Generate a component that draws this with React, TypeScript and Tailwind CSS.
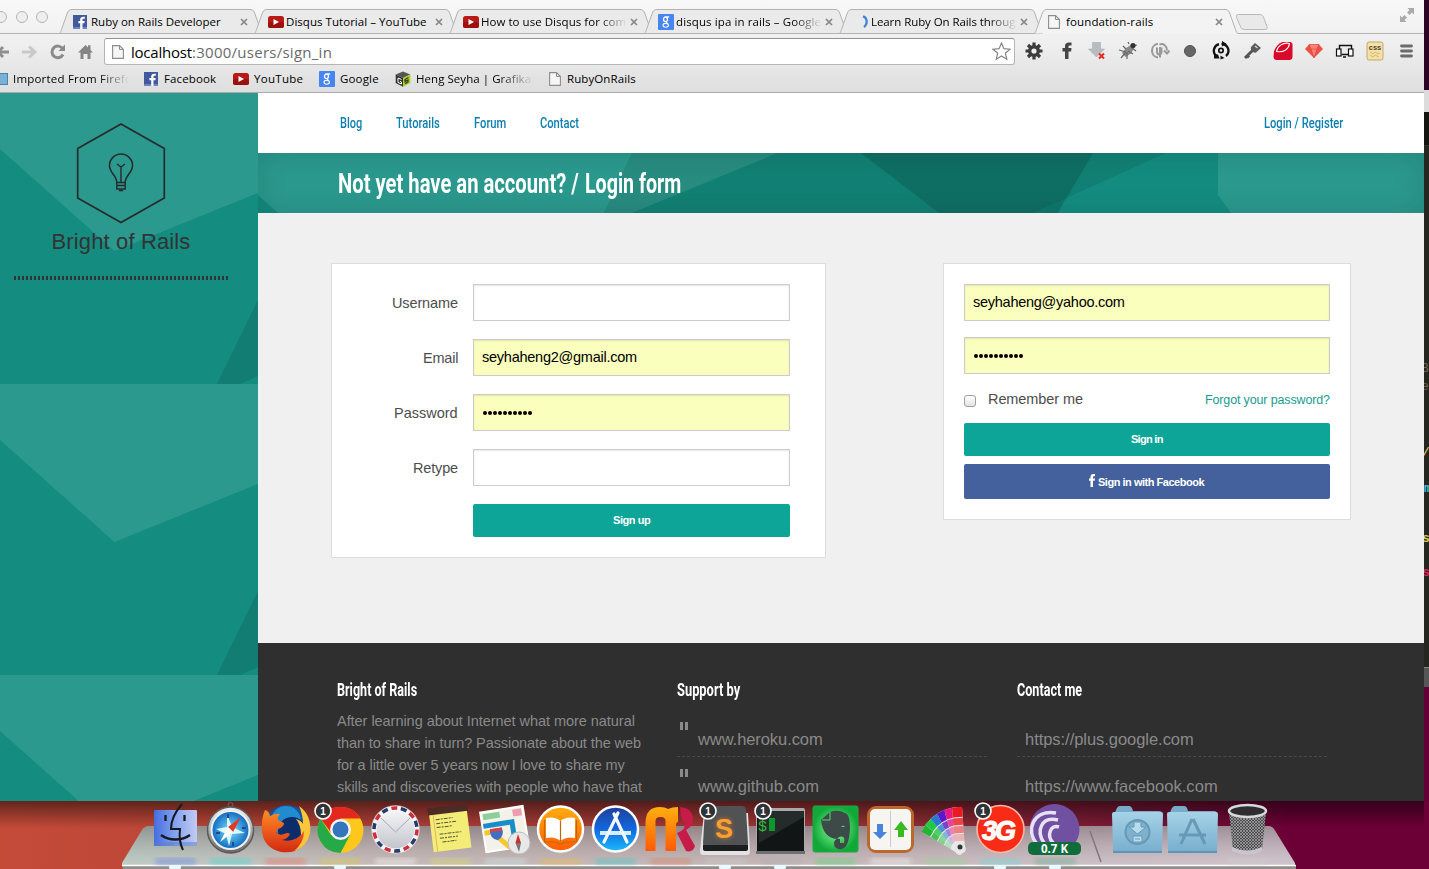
import React, { useLayoutEffect, useRef, useState } from "react";
import type { ReactNode } from "react";

type FitProps = { w: number; children: string; className?: string; stretch?: boolean };

/* Sets a line of text to a given measure, by tracking or by condensing the glyphs. */
function Fit({ w, children, className = "", stretch = false }: FitProps) {
  const ref = useRef<HTMLSpanElement>(null);
  const [style, setStyle] = useState<React.CSSProperties>({});
  useLayoutEffect(() => {
    const natural = ref.current ? ref.current.offsetWidth : w;
    setStyle(
      stretch
        ? { transform: `scaleX(${w / natural})` }
        : { letterSpacing: `${(w - natural) / children.length}px` },
    );
  }, [w, children, stretch]);
  return (
    <span className={`inline-block shrink-0 whitespace-nowrap ${className}`} style={{ width: w }}>
      <span ref={ref} className="inline-block origin-left" style={style}>
        {children}
      </span>
    </span>
  );
}

/* ---------- small site icons ---------- */

const FacebookIcon = () => (
  <svg width="14" height="14" viewBox="0 0 14 14" className="shrink-0">
    <rect width="14" height="14" fill="#42599b" />
    <rect y="12" width="14" height="2" fill="#6d84bf" />
    <path d="M7.2 14V8.3H5.4V6.1h1.8V4.6c0-2 1.2-2.900 3-2.900.7 0 1.300.1 1.600.1v2h-1.200c-.9 0-1.100.5-1.100 1.100v1.200h2.200l-.3 2.200H9.500V14z" fill="#fff" />
  </svg>
);
const YoutubeIcon = () => (
  <svg width="16" height="12" viewBox="0 0 16 12" className="shrink-0">
    <rect width="16" height="12" rx="2.500" fill="#b81a16" />
    <rect y="6" width="16" height="6" rx="2.500" fill="#9c100e" />
    <path d="M5.500 3v6l5.500-3z" fill="#fff" />
  </svg>
);
const GoogleIcon = () => (
  <svg width="16" height="16" viewBox="0 0 16 16" className="shrink-0">
    <rect width="16" height="16" rx="1" fill="#4686f4" />
    <ellipse cx="7.500" cy="5.300" rx="2" ry="2.300" fill="none" stroke="#fff" strokeWidth="1.300" />
    <ellipse cx="7.700" cy="11.300" rx="2.700" ry="1.900" fill="none" stroke="#fff" strokeWidth="1.100" />
    <path d="M8.500 2.900h2.700M8 7.500l1.500 2" stroke="#fff" strokeWidth="1.100" />
  </svg>
);
const PageIcon = () => (
  <svg width="12" height="14" viewBox="0 0 12 14" className="shrink-0">
    <path d="M.6.6h6.900l3.900 3.900v8.900H.6z" fill="#f6f6f6" stroke="#8d8d8d" strokeWidth="1.100" />
    <path d="M7.500.6v3.900h3.900" fill="none" stroke="#8d8d8d" />
  </svg>
);
const SpinnerIcon = () => (
  <svg width="16" height="16" viewBox="0 0 16 16" className="shrink-0">
    <path d="M10 2.200c4.500 1.500 5 7.500 1 11" fill="none" stroke="#3f83d6" strokeWidth="2.200" />
  </svg>
);
const CubeIcon = () => (
  <svg width="16" height="16" viewBox="0 0 16 16" className="shrink-0">
    <path d="M8 .5l7.300 3L8 7 .7 3.500z" fill="#555" />
    <path d="M.7 3.500L8 7v8.700L.7 12z" fill="#333" />
    <path d="M15.300 3.500L8 7v8.700l7.300-3.700z" fill="#a9cf22" />
    <path d="M6.500 8.500L3 7v4.500l3.500 1.500v-2l-1.500-.6" fill="none" stroke="#fff" strokeWidth="1" />
    <path d="M13.500 6.500l-3.500 2v2l3-1.500v2l-3 1.600" fill="none" stroke="#333" strokeWidth="1.200" />
  </svg>
);

/* ---------- browser chrome ---------- */

type TabData = { icon: ReactNode; title: string; w: number; faded?: boolean; active?: boolean };
const tabs: TabData[] = [
  { icon: <FacebookIcon />, title: "Ruby on Rails Developer", w: 130 },
  { icon: <YoutubeIcon />, title: "Disqus Tutorial – YouTube", w: 141 },
  { icon: <YoutubeIcon />, title: "How to use Disqus for com", w: 145, faded: true },
  { icon: <GoogleIcon />, title: "disqus ipa in rails – Google", w: 145, faded: true },
  { icon: <SpinnerIcon />, title: "Learn Ruby On Rails throug", w: 144, faded: true },
  { icon: <PageIcon />, title: "foundation-rails", w: 87, active: true },
];

function Tab({ icon, title, w, faded, active }: TabData) {
  return (
    <div className="relative -ml-[9px] flex h-[25px] w-[204px] shrink-0 items-center pl-[15px]">
      <svg className="absolute inset-0" width="204" height="25" viewBox="0 0 204 25">
        <path
          d="M0 24.500C1 24.500 1.500 23.500 2.500 20.500L8 5C9 2 10 .5 13 .5H191C194 .5 195 2 196 5L201.500 20.500C202.500 23.500 203 24.500 204 24.500"
          fill={active ? "#f3f3f3" : "#eaeaea"}
          stroke="#b2b2b2"
        />
        {active ? null : <path d="M0 24.500H204" stroke="#b2b2b2" />}
      </svg>
      <span className="relative -ml-px mr-px flex w-[17px] shrink-0 items-center">{icon}</span>
      <span className={`relative flex w-[145px] overflow-hidden leading-5 ${faded ? "[mask-image:linear-gradient(to_right,#000_118px,transparent_146px)]" : ""}`}>
        <Fit w={w}>{title}</Fit>
      </span>
      <svg className="relative ml-[4px] mt-px shrink-0" width="8" height="8" viewBox="0 0 8 8">
        <path d="M1 1l6 6M7 1L1 7" stroke="#868686" strokeWidth="1.700" />
      </svg>
    </div>
  );
}

const Slot = ({ children, className = "w-[31px]" }: { children: ReactNode; className?: string }) => (
  <span className={`flex shrink-0 items-center justify-center ${className}`}>
    <svg width="20" height="20" viewBox="0 0 20 20">{children}</svg>
  </span>
);

function Extensions() {
  return (
    <div className="flex h-[36px] items-center">
      <Slot className="w-[32px]">
        <g stroke="#3c3c3c" strokeWidth="3.200">
          <path d="M10 1.500v17M1.500 10h17M4 4l12 12M16 4L4 16" />
        </g>
        <circle cx="10" cy="10" r="6" fill="#3c3c3c" />
        <circle cx="10" cy="10" r="2.600" fill="#efefef" />
      </Slot>
      <Slot className="w-[33px]">
        <path d="M8 18v-7.500H5.500V7H8V5.500C8 2.500 9.500 1.500 12 1.500h2.500v3h-1.700c-1 0-1.300.3-1.300 1.200V7h3l-.4 3.500h-2.600V18z" fill="#444" />
      </Slot>
      <Slot className="w-[28px]">
        <path d="M5.500 1.500h8V8h4L9.500 16 1.500 8h4z" fill="#b8bcc1" stroke="#a0a4a8" strokeWidth=".5" />
        <path d="M12 12.500l5 5M17 12.500l-5 5" stroke="#e52a22" strokeWidth="2" />
      </Slot>
      <Slot className="w-[33px]">
        <path d="M4 12l4-5 5-3 3 3-3 5.500-5.500 3.500z" fill="#8b8b8b" />
        <path d="M1 9l7 2M3 17l5-6M9 18v-7M15 13l-5-3M11 3l-1-2M15 5l4-1M14 7l4 3M5 5l3 3" stroke="#666" strokeWidth="1.200" />
        <circle cx="15" cy="4.500" r="2.600" fill="#333" />
      </Slot>
      <Slot className="w-[31px]">
        <path d="M8 2.800C0 4 0 15.500 8 16.500M7 6.500v4c0 4 4.500 4 4.500 0v-4M10 6v10.500M9.500 3.500c4-1.500 7.500 1.500 7.500 6M14 9.500l3 3 2.500-3" fill="none" stroke="#999" strokeWidth="2" />
      </Slot>
      <Slot className="w-[30px]"><circle cx="10" cy="10" r="5.500" fill="#666" stroke="#515151" /></Slot>
      <Slot>
        <path d="M8 3.200A6.800 6.800 0 005 14.800M10.500 3a6.800 6.800 0 014.500 12" fill="none" stroke="#111" strokeWidth="2.300" />
        <path d="M3 13v4.500h5.500L7 13.500zM11 0v5.500l4.500-2.700zM9.500 14.500v4l4-1.500z" fill="#111" />
        <circle cx="10" cy="9.500" r="2.200" fill="none" stroke="#111" strokeWidth="1.700" />
      </Slot>
      <Slot>
        <path d="M3 17l8-8M5 14.500l2 2" stroke="#555" strokeWidth="3" />
        <path d="M9 6l4-4 6 5-5 4.500c-2 1-6-2-5-5.500z" fill="#5b5b5b" />
        <path d="M13 5l2.500 2" stroke="#ddd" strokeWidth="1.300" />
      </Slot>
      <Slot>
        <path d="M1 10Q4 3 9.500 1H18l1.500 2v13q0 2.500-2.500 3H3q-2.500-.5-2.500-3z" fill="#d9092a" />
        <path d="M3.500 10.500C4.500 5 10 1 16.500 2.500 16 7.500 11 12 3.500 10.500z" fill="none" stroke="#fff" strokeWidth="1.100" />
      </Slot>
      <Slot>
        <path d="M5 3.500h10l4 4.500-9 9-9-9z" fill="#ee5144" />
        <path d="M5 3.500h10L13 8H7zM7 8l3 9 3-9" fill="#ff8278" stroke="#cc3930" strokeWidth=".5" />
      </Slot>
      <Slot>
        <path d="M4.500 8V4.500h12V8M6.500 13.500h7M8 16h3" fill="none" stroke="#111" strokeWidth="1.400" />
        <rect x="1.500" y="8" width="4.500" height="7" fill="#fff" stroke="#111" strokeWidth="1.200" />
        <rect x="13.500" y="8" width="4.500" height="7" fill="#fff" stroke="#111" strokeWidth="1.200" />
      </Slot>
      <Slot>
        <rect x="1" y="1" width="16" height="18" rx="2" fill="#f3e1a9" stroke="#c3a868" />
        <text x="9" y="8.500" textAnchor="middle" fontSize="7.500" fontWeight="700" fontFamily="Liberation Sans, sans-serif" fill="#57442a">css</text>
        <path d="M4 11l3 2 2-2 3 2 2-1M4 14l3 2 2-2 4 2" fill="none" stroke="#d3b86d" />
      </Slot>
      <Slot>
        <path d="M4.500 5h10M4.500 10h10M4.500 15h10" stroke="#6b6b6b" strokeWidth="2.800" strokeLinecap="round" />
      </Slot>
    </div>
  );
}

function BrowserChrome() {
  return (
    <header className="flex h-[93px] flex-col overflow-hidden border-b border-[#ababab] bg-gradient-to-b from-[#f8f8f8] via-[#eeeeee] to-[#dedede] font-['Open_Sans',sans-serif] text-[11.5px] font-medium text-black">
      <div className="flex h-[34px] shrink-0 items-end">
        <div className="flex h-full w-[59px] shrink-0 items-center border-b border-[#b2b2b2]">
          <span className="-ml-[5px] size-3 shrink-0 rounded-full border-[1.5px] border-[#b4b4b4] bg-[#eeeeee]" />
          <span className="ml-[9px] size-3 shrink-0 rounded-full border-[1.5px] border-[#b4b4b4] bg-[#eeeeee]" />
          <span className="ml-[8px] size-3 shrink-0 rounded-full border-[1.5px] border-[#b4b4b4] bg-[#eeeeee]" />
        </div>
        <div className="flex pl-[9px]">
          {tabs.map((t) => <Tab key={t.title} {...t} />)}
        </div>
        <div className="flex h-full flex-1 items-center justify-between border-b border-[#b2b2b2] pr-[10px]">
          <svg className="-ml-[3px] mt-[10px]" width="34" height="16" viewBox="0 0 34 16">
            <path d="M3.500.5H24c3 0 4 1 5 4l3 8c.6 2 0 3-2 3H10c-3 0-4-1-5-4L1.500 3.500c-.6-2 0-3 2-3z" fill="#e9e9e9" stroke="#b9b9b9" />
          </svg>
          <svg className="-mt-[3px]" width="14" height="14" viewBox="0 0 14 14">
            <path d="M7.500 0H14v6.500L12 4.500 9.500 7 7 4.500 9.500 2zM6.500 14H0V7.500l2 2L4.500 7 7 9.500 4.500 12z" fill="#aaa" />
          </svg>
        </div>
      </div>
      <div className="flex h-[35px] shrink-0 items-center">
        <svg width="104" height="20" viewBox="0 0 104 20" fill="none">
          <path d="M9 10H-2M3 5l-5 5 5 5" stroke="#8f8f8f" strokeWidth="3" />
          <path d="M22 10h12M29 4.500l6 5.500-6 5.500" stroke="#c9c9c9" strokeWidth="3" />
          <path d="M62.500 6.500A5.800 5.800 0 1063 12.500" stroke="#8a8a8a" strokeWidth="3" />
          <path d="M65 2.500V9h-6.500z" fill="#8a8a8a" />
          <path d="M78 10.500L85.500 3l2.500 2.500V3.200h2.500V8l2.500 2.500h-2.500V17h-3v-5h-4v5h-3v-6.500z" fill="#858585" />
        </svg>
        <div className="flex h-[27px] w-[911px] shrink-0 items-center rounded-[3px] border border-t-[1.5px] border-[#b5b5b5] border-t-[#929292] bg-white pl-[7px]">
          <PageIcon />
          <span className="ml-[7px] flex text-[15px] leading-6">
            <Fit w={61}>localhost</Fit>
            <Fit w={140} className="text-[#6a6a6a]">:3000/users/sign_in</Fit>
          </span>
          <svg className="ml-auto mr-[3px]" width="19" height="19" viewBox="0 0 19 19">
            <path d="M9.500 1l2.400 5.700 6.100.5-4.700 4 1.500 6-5.300-3.300-5.300 3.300 1.500-6-4.700-4 6.100-.5z" fill="#fff" stroke="#858585" strokeWidth="1.200" />
          </svg>
        </div>
        <div className="ml-[3px] -mt-px"><Extensions /></div>
      </div>
      <div className="flex h-[20px] shrink-0 items-center leading-5">
        <span className="h-[12px] w-[8px] border border-l-0 border-[#4a84ac] bg-[#78b1d6]" />
        <span className="ml-[5px] w-[131px] [mask-image:linear-gradient(to_right,#000_86px,transparent_116px)]"><Fit w={119}>Imported From Firefo</Fit></span>
        <FacebookIcon /><Fit w={52} className="ml-[6px] mr-[17px]">Facebook</Fit>
        <YoutubeIcon /><Fit w={49} className="ml-[5px] mr-[16px]">YouTube</Fit>
        <GoogleIcon /><Fit w={39} className="ml-[5px] mr-[16px]">Google</Fit>
        <CubeIcon />
        <span className="ml-[5px] w-[133px] [mask-image:linear-gradient(to_right,#000_82px,transparent_118px)]"><Fit w={115}>Heng Seyha | Grafika</Fit></span>
        <PageIcon /><Fit w={69} className="ml-[6px]">RubyOnRails</Fit>
      </div>
    </header>
  );
}

/* ---------- page ---------- */

function Tile() {
  return (
    <svg className="block shrink-0" width="258" height="291" viewBox="0 0 258 291">
      <path d="M0 0H258V291H0z" fill="#148c80" />
      <path d="M0 0H258V100L114.500 158 0 56z" fill="#2b998e" />
      <path d="M258 207L217 291H240L258 283z" fill="#127d72" />
    </svg>
  );
}

function Sidebar() {
  return (
    <aside className="relative h-full w-[258px] shrink-0 overflow-hidden">
      <div className="flex flex-col"><Tile /><Tile /><Tile /></div>
      <div className="absolute inset-0 flex flex-col items-center pt-[30px]">
        <svg className="-ml-4" width="90" height="101" viewBox="0 0 90 101" fill="none" stroke="#252b2b" strokeWidth="1.700">
          <path d="M45 1L88.300 25.500V75L45 99.500 1.700 75V25.500z" />
          <path d="M40.800 59.500c0-7-7.300-9.500-7.300-17a11.500 11.500 0 0123 0c0 7.500-7.300 10-7.300 17z" strokeWidth="1.500" />
          <path d="M45 59V44l-4-3M45 44l4-3M40.800 59v7h8.400v-7M41 62.500h8" strokeWidth="1.400" />
          <path d="M43 67.500h4" strokeWidth="1.600" />
        </svg>
        <div className="-ml-4 mt-[3px] h-[30px] font-['Liberation_Sans',sans-serif] text-[22px] leading-[30px] text-[#333]">
          <Fit w={139}>Bright of Rails</Fit>
        </div>
        <div className="-ml-4 mt-[19px] h-1 w-[214px] bg-[repeating-linear-gradient(to_right,#333_0_2px,transparent_2px_4px)]" />
      </div>
    </aside>
  );
}

function Nav() {
  return (
    <nav className="flex h-[60px] items-center bg-white pl-[82px] pr-[81px] font-[Roboto,sans-serif] text-[14px] font-medium text-[#0c7fb0]">
      <Fit stretch w={22} className="mr-[34px]">Blog</Fit>
      <Fit stretch w={44} className="mr-[34px]">Tutorails</Fit>
      <Fit stretch w={32} className="mr-[34px]">Forum</Fit>
      <Fit stretch w={39}>Contact</Fit>
      <Fit stretch w={79} className="ml-auto">Login / Register</Fit>
    </nav>
  );
}

function Banner() {
  return (
    <div className="relative flex h-[60px] items-center overflow-hidden">
      <svg className="absolute inset-0" width="1166" height="60" viewBox="0 0 1166 60">
        <path d="M0 0H1166V60H0z" fill="#148c80" />
        <path d="M0 0H374L346 60H20L0 42z" fill="#2b998e" />
        <path d="M374 0H520L374 60H346z" fill="#288c80" />
        <path d="M520 0H908L775 60H374z" fill="#128074" />
        <path d="M603 0H835L808 46 775 60H681z" fill="#0f6f64" />
        <path d="M808 45L800 60H775z" fill="#10776b" />
        <path d="M960 0H1166V60H973L960 42z" fill="#2b998e" />
      </svg>
      <div className="absolute inset-0 shadow-[inset_0_0_30px_rgba(0,0,0,0.13)]" />
      <h1 className="relative mt-[2px] flex gap-[6px] pl-[80px] font-[Roboto,sans-serif] text-[28px] font-bold leading-[60px] text-white">
        <Fit stretch w={241}>Not yet have an account? /</Fit>
        <Fit stretch w={96}>Login form</Fit>
      </h1>
    </div>
  );
}

function Field({ value, filled, w }: { value?: string; filled?: boolean; w?: number }) {
  return (
    <div className={`flex h-[37px] flex-1 items-center border border-[#ccc] pl-2 text-[14.5px] text-black shadow-[inset_0_1px_2px_rgba(0,0,0,0.1)] ${filled ? "bg-[#faffbd]" : "bg-white"}`}>
      {value ? <Fit w={w ?? 100} className="pt-px">{value}</Fit> : null}
      {filled && !value ? (
        <span className="flex gap-px pl-px">
          {Array.from({ length: 10 }, (_, i) => <span key={i} className="size-1 rounded-full bg-black" />)}
        </span>
      ) : null}
    </div>
  );
}

function Row({ label, w, children }: { label: string; w: number; children: ReactNode }) {
  return (
    <div className="mb-[18px] flex items-center">
      <label className="mr-[15px] flex w-[106px] justify-end pt-[2px] text-[14.5px] text-[#4d4d4d]"><Fit w={w}>{label}</Fit></label>
      {children}
    </div>
  );
}

function Forms() {
  return (
    <main className="flex h-[430px] items-start bg-[#f0f0f0] pl-[73px] pt-[50px] font-['Liberation_Sans',sans-serif]">
      <section className="h-[295px] w-[495px] border border-[#ddd] bg-white pl-5 pr-[35px] pt-5">
        <Row label="Username" w={66}><Field /></Row>
        <Row label="Email" w={35}><Field filled value="seyhaheng2@gmail.com" w={155} /></Row>
        <Row label="Password" w={64}><Field filled /></Row>
        <Row label="Retype" w={45}><Field /></Row>
        <div className="ml-[121px] flex h-[33px] items-center justify-center rounded-[2px] bg-[#0ea599] text-[11px] font-bold text-white"><Fit w={37}>Sign up</Fit></div>
      </section>
      <section className="ml-[117px] flex h-[257px] w-[408px] flex-col border border-[#ddd] bg-white px-5 pt-5">
        <div className="flex"><Field filled value="seyhaheng@yahoo.com" w={152} /></div>
        <div className="mt-4 flex"><Field filled /></div>
        <div className="mt-[15px] flex h-[22px] items-center">
          <span className="mt-px size-3 rounded-[3px] border border-[#a0a0a0] bg-gradient-to-b from-white to-[#e3e3e3]" />
          <Fit w={95} className="ml-3 text-[14.5px] text-[#4d4d4d]">Remember me</Fit>
          <Fit w={125} className="ml-auto text-[12.5px] text-[#179c90]">Forgot your password?</Fit>
        </div>
        <div className="mt-[12px] flex h-[33px] items-center justify-center rounded-[2px] bg-[#0ea599] text-[11px] font-bold text-white"><Fit w={32}>Sign in</Fit></div>
        <div className="mt-2 flex h-[35px] items-center justify-center rounded-[2px] bg-[#45619d] pr-px text-[11px] font-bold text-white">
          <svg className="-mt-[3px] mr-[3px]" width="6" height="13" viewBox="0 0 6 13"><path d="M1.500 13V6.800H0V4.500h1.500V3c0-2 1-3 2.700-3H6v2.300H4.800c-.6 0-.8.3-.8.9v1.300h2l-.3 2.300H4V13z" fill="#fff" /></svg>
          <Fit w={106} className="pt-px">Sign in with Facebook</Fit>
        </div>
      </section>
    </main>
  );
}

const Heading = ({ w, children }: { w: number; children: string }) => (
  <h2 className="h-[22px] font-[Roboto,sans-serif] text-[19px] font-bold leading-[24px] text-white"><Fit stretch w={w}>{children}</Fit></h2>
);

const Mark = () => (
  <span className="flex w-[21px] gap-[2px] pl-[3px] pt-[3px]">
    <span className="h-2 w-[3px] bg-[#8a8a8a]" /><span className="h-2 w-[3px] bg-[#8a8a8a]" />
  </span>
);

function LinkList({ items, marks }: { items: [string, number][]; marks?: boolean }) {
  return (
    <ul className="mt-[19px] w-[310px] text-[16.5px] leading-5">
      {items.map(([text, w]) => (
        <li key={text} className="mb-[9px] flex h-[38px] border-b border-dashed border-[#4a4a4a]">
          {marks ? <Mark /> : <span className="w-2" />}
          <span className="pt-[10px]"><Fit w={w}>{text}</Fit></span>
        </li>
      ))}
    </ul>
  );
}

function Footer() {
  return (
    <footer className="flex flex-1 overflow-hidden bg-[#2f2f2f] pl-[79px] pt-[35px] font-['Liberation_Sans',sans-serif] text-[#8a8a8a]">
      <div className="w-[340px]">
        <Heading w={80}>Bright of Rails</Heading>
        <p className="mt-[10px] flex flex-col text-[14.5px] leading-[22px]">
          <Fit w={298}>After learning about Internet what more natural</Fit>
          <Fit w={304}>than to share in turn? Passionate about the web</Fit>
          <Fit w={288}>for a little over 5 years now I love to share my</Fit>
          <Fit w={305}>skills and discoveries with people who have that</Fit>
        </p>
      </div>
      <div className="w-[340px]">
        <Heading w={63}>Support by</Heading>
        <LinkList marks items={[["www.heroku.com", 125], ["www.github.com", 121]]} />
      </div>
      <div>
        <Heading w={65}>Contact me</Heading>
        <LinkList items={[["https://plus.google.com", 169], ["https://www.facebook.com", 193]]} />
      </div>
    </footer>
  );
}

/* ---------- windows behind the browser ---------- */

function EditorEdge() {
  return (
    <div className="flex w-[5px] flex-col overflow-hidden bg-[#640035] font-['Liberation_Mono',monospace] text-[13px] leading-[18px]">
      <div className="h-[90px] shrink-0 bg-[#2c0424]" />
      <div className="h-[22px] shrink-0 bg-[#dcdcdc]" />
      <div className="h-[34px] shrink-0 border-b border-[#333] bg-[#141510]" />
      <div className="h-[521px] shrink-0 bg-[#25261f] pt-[214px]">
        <div className="-ml-[3px] text-[#6c6856]">B</div>
        <div className="-ml-[3px] text-[#6c6856]">e</div>
        <div className="-ml-[2px] mt-[48px] text-[#e6db74]">/</div>
        <div className="mt-[18px] font-bold text-[#45bdd2]">m</div>
        <div className="-ml-[2px] mt-[32px] font-bold text-[#d8cf65]">s</div>
        <div className="-ml-[2px] mt-[16px] font-bold text-[#dc2161]">s</div>
      </div>
      <div className="h-[20px] shrink-0 border-t border-[#888] bg-[#565656]" />
    </div>
  );
}

/* ---------- dock ---------- */

const Cell = ({ children, glow, running }: { children: ReactNode; glow?: string; running?: boolean }) => (
  <svg className="shrink-0 overflow-visible" width="55" height="68" viewBox="0 0 55 68">
    {glow ? <rect x="7" y="57" width="41" height="7" rx="3" fill={glow} opacity=".4" filter="url(#soft)" /> : null}
    {running ? <rect x="21" y="64" width="12" height="4" rx="1.500" fill="#e8faff" /> : null}
    {children}
  </svg>
);

const Badge = () => (
  <g>
    <circle cx="10" cy="10" r="8" fill="#303336" stroke="#fff" strokeWidth="1.600" />
    <text x="10" y="13.500" textAnchor="middle" fontSize="10" fontWeight="700" fontFamily="Liberation Sans, sans-serif" fill="#fff">1</text>
  </g>
);

const swatches = ["#22b52e", "#22c947", "#2879cf", "#5c19c9", "#e51a84", "#ea1a22"];

function Folder({ children }: { children: ReactNode }) {
  return (
    <Cell>
      <path d="M5 13q0-2 1-4l1-2q1-2 3-2h9q2 0 3 2l1 3h26q3 0 3 3v37H3z" fill="#78abc7" />
      <path d="M2 13q0-2 2-2h47q2 0 2 2l-1 36q0 2-2 2H5q-2 0-2-2z" fill="url(#folder)" />
      <path d="M3 50h49v2H3z" fill="#5f94b3" />
      <g fill="none" stroke="#6699b6" strokeWidth="2">{children}</g>
    </Cell>
  );
}

function Dock() {
  return (
    <div className="relative h-[68px] w-full bg-gradient-to-r from-[#c54b39] via-[#983333] via-60% to-[#6c0036] to-90%">
      <div className="absolute inset-y-0 left-0 w-[1424px] bg-gradient-to-b from-black/50 to-transparent to-40%" />
      <svg className="absolute inset-0" width="1429" height="68" viewBox="0 0 1429 68">
        <defs>
          <linearGradient id="shelf"><stop offset="0" stopColor="#adc0b7" /><stop offset=".2" stopColor="#b7aaa7" /><stop offset=".5" stopColor="#b6a4a5" /><stop offset="1" stopColor="#c5b6c0" /></linearGradient>
          <linearGradient id="shade" x2="0" y2="1"><stop offset="0" stopColor="#54434a" stopOpacity=".35" /><stop offset="1" stopColor="#fff" stopOpacity=".22" /></linearGradient>
          <linearGradient id="folder" x2="0" y2="1"><stop offset="0" stopColor="#a5d2e8" /><stop offset="1" stopColor="#78aecd" /></linearGradient>
          <linearGradient id="finder"><stop offset="0" stopColor="#456de0" /><stop offset=".5" stopColor="#85a4ee" /><stop offset="1" stopColor="#c3caf2" /></linearGradient>
          <linearGradient id="orange" x2="0" y2="1"><stop offset="0" stopColor="#ffaf10" /><stop offset="1" stopColor="#ff5b05" /></linearGradient>
          <linearGradient id="fox" x2="0" y2="1"><stop offset="0" stopColor="#f79023" /><stop offset=".5" stopColor="#ee5a1c" /><stop offset="1" stopColor="#d02a12" /></linearGradient>
          <linearGradient id="blue" x2="0" y2="1"><stop offset="0" stopColor="#213f97" /><stop offset=".5" stopColor="#1267de" /><stop offset="1" stopColor="#19baff" /></linearGradient>
          <linearGradient id="paper" x2="0" y2="1"><stop offset="0" stopColor="#f5f5f7" /><stop offset="1" stopColor="#c3c5cc" /></linearGradient>
          <radialGradient id="sky"><stop offset="0" stopColor="#7be4ff" /><stop offset="1" stopColor="#146fc4" /></radialGradient>
          <radialGradient id="leaf"><stop offset="0" stopColor="#8dffa0" /><stop offset="1" stopColor="#10a838" /></radialGradient>
          <linearGradient id="metal" x2="0" y2="1"><stop offset="0" stopColor="#f3f3f3" /><stop offset="1" stopColor="#666" /></linearGradient>
          <filter id="soft"><feGaussianBlur stdDeviation="2.500" /></filter>
          <pattern id="mesh" width="3" height="3" patternUnits="userSpaceOnUse"><path d="M0 0l3 3M3 0L0 3" stroke="#bbb" strokeWidth=".6" /></pattern>
        </defs>
        <path d="M149 25H1268q4 0 6 3L1295 62v3H122v-3L142 29q3-4 7-4z" fill="url(#shelf)" />
        <path d="M149 25H1268q4 0 6 3L1295 62v3H122v-3L142 29q3-4 7-4z" fill="url(#shade)" />
        <path d="M122 64H1296V68H123z" fill="#918c8c" />
        <path d="M122 64.500H1296" stroke="#fff" strokeWidth="1.300" />
      </svg>
      <div className="relative flex pl-[147.500px]">
        <Cell glow="#5577ee" running>
          <rect x="6" y="9" width="43" height="36" rx="1" fill="url(#finder)" />
          <path d="M6 41h43v4H6z" fill="#597bc9" opacity=".5" />
          <path d="M34 3C27 11 23 20 23 28h9c-1 8 0 15 3 21" fill="none" stroke="#161a20" strokeWidth="2" />
          <path d="M13 34c8 6 21 6 29 0M17.500 14v6M36.500 14v6" fill="none" stroke="#161a20" strokeWidth="2.300" />
        </Cell>
        <Cell glow="#30ddd8">
          <circle cx="27.500" cy="4" r="2.500" fill="none" stroke="#666" />
          <circle cx="27.500" cy="29" r="23" fill="url(#metal)" stroke="#5b5b5b" strokeWidth="1.500" />
          <circle cx="27.500" cy="29" r="20" fill="#f1f1f1" /><circle cx="27.500" cy="29" r="18" fill="url(#sky)" />
          <path d="M24 13l5 13 13 6-13 1-3 12-3-12-10-5 11-2z" fill="#def8ff" />
          <path d="M25 26L38 16 30 31z" fill="#e73824" /><path d="M25 26L17 41l13-10z" fill="#fff" />
          <path d="M25 13v4M13 32h4M30 41v4M39 27h4" stroke="#274788" strokeWidth="2" />
        </Cell>
        <Cell glow="#ee6655">
          <circle cx="29" cy="27" r="23" fill="#17529c" /><circle cx="28" cy="20" r="15" fill="#218bd0" /><circle cx="34" cy="30" r="14" fill="#0c2d6c" />
          <path d="M7 9q4 1 5 6 5-3 10-2-3 4-2 6l6 3q0 4-6 6l-2 3q3 4 8 2 4-2 6 0-2 5-8 6 14 3 21-8 4-6 4-14 6 16-4 27Q37 53 23 51 6 47 4 31 3 18 7 9z" fill="url(#fox)" />
          <path d="M41 5q13 9 11 27-3 14-16 18 10-8 10-20l-3 4q0-10-5-16 6 2 7 5 0-9-4-18z" fill="#fbc63a" />
        </Cell>
        <Cell glow="#ddcc44" running>
          <circle cx="27.500" cy="29" r="23" fill="#fdc71c" />
          <path d="M7.500 17.500A23 23 0 0147.500 17.500H27.500L20 34z" fill="#e5281f" />
          <path d="M7.500 17.500A23 23 0 0027.500 52L37 34H18z" fill="#26a947" />
          <circle cx="27.500" cy="28.500" r="10.500" fill="#f4f4f4" /><circle cx="27.500" cy="28.500" r="8" fill="#3376bd" />
          <Badge />
        </Cell>
        <Cell glow="#ffffff">
          <circle cx="27.500" cy="28.500" r="24" fill="#f7f7f7" stroke="#bbb" strokeWidth=".5" />
          <circle cx="27.500" cy="28.500" r="21.500" fill="none" stroke="#cf2f3c" strokeWidth="3.500" strokeDasharray="6 13.300" />
          <circle cx="27.500" cy="28.500" r="21.500" fill="none" stroke="#263b70" strokeWidth="3.500" strokeDasharray="6 13.300" strokeDashoffset="-9.600" />
          <circle cx="27.500" cy="28.500" r="19" fill="url(#paper)" /><path d="M13 17l14.500 14L42 17" fill="none" stroke="#a7a9ad" />
        </Cell>
        <Cell glow="#dddd66">
          <g transform="rotate(-7 27 28)"><rect x="8" y="7" width="38" height="42" fill="#f3ed78" /><path d="M7 5h40v7H7z" fill="#4d2a25" />
            <path d="M14 17h17M14 21h20M14 25h16M16 32h22M16 36h18M18 40h14" stroke="#595633" strokeWidth="1" strokeDasharray="4 1 2 1" /><path d="M12 12v37" stroke="#dba25a" strokeWidth=".7" /></g>
        </Cell>
        <Cell glow="#cceeee">
          <g transform="rotate(-9 27 28)"><rect x="5" y="8" width="43" height="40" fill="#f4f2e8" stroke="#fff" strokeWidth="2" /><path d="M7 10h17v6H7z" fill="#8bd09a" /><path d="M37 10h9v7h-9z" fill="#ef9dae" />
            <path d="M6 22h29v25" fill="none" stroke="#178dc9" strokeWidth="5" /><path d="M6 29l8 0 15 18" fill="none" stroke="#f7c72d" strokeWidth="5" /><path d="M12 26h12q2 9-6 12-8-3-6-12z" fill="#416fc4" /><path d="M12 26h12v3H12z" fill="#da4449" /></g>
          <circle cx="41" cy="42" r="11" fill="#e8e8e8" stroke="#bbb" /><path d="M37.500 42L40 33l3 9z" fill="#d52b2b" /><path d="M37.500 42h5.500l-2 9z" fill="#777" />
        </Cell>
        <Cell glow="#eebb44">
          <circle cx="27.500" cy="28" r="22.500" fill="url(#orange)" stroke="#fff" strokeWidth="2.500" />
          <path d="M13 17q9-2 14.500 3Q33 15 42 17v20q-9-2-14.500 3Q22 35 13 37z" fill="#fff" />
          <path d="M27.500 20v20M11.500 19v22q10-1 16 2 6-3 16-2V19" fill="none" stroke="#c56700" strokeWidth="1.200" />
        </Cell>
        <Cell glow="#33cccc">
          <circle cx="27.500" cy="28" r="22.500" fill="url(#blue)" stroke="#fff" strokeWidth="2.500" />
          <path d="M12 32h31" stroke="#d8ecff" strokeWidth="4" /><path d="M30 12L16 41M26 13l13 28" stroke="#f3f9ff" strokeWidth="3.200" strokeLinecap="round" />
        </Cell>
        <Cell glow="#dd7755">
          <path d="M2.500 50V21Q3 6 17 6q5 0 8 2 4-2 10-2v15q-2 0-2 4v25H22.500V20q0-4-5-4t-5 4v30z" fill="url(#orange)" />
          <path d="M37 6q13 1 13 13 0 6-7 10l9 16q-2 7-9 5L34 32q9-3 8-10-5-3-5-16z" fill="#c71b48" />
        </Cell>
        <Cell glow="#cccccc" running>
          <path d="M6 12h44l2 38q0 4-3 4H5q-3 0-3-4z" fill="#e2e2e2" /><path d="M11 5h33q3 0 4 3l2 34q0 5-4 5H9q-4 0-4-5L7 8q1-3 4-3z" fill="#505254" />
          <path d="M5 44h45v4q0 2-3 2H8q-3 0-3-2z" fill="#1c1d1f" />
          <text x="26" y="37" textAnchor="middle" fontSize="27" fontWeight="700" fontFamily="Liberation Sans, sans-serif" fill="#ff8a20" opacity=".7" filter="url(#soft)" aria-hidden="true">S</text>
          <text x="26" y="37" textAnchor="middle" fontSize="27" fontWeight="700" fontFamily="Liberation Sans, sans-serif" fill="#f8a033">S</text>
          <Badge />
        </Cell>
        <Cell glow="#aaaaaa" running>
          <rect x="3" y="7" width="49" height="46" rx="2" fill="#aaa" /><rect x="4" y="10" width="47" height="40" fill="#111516" /><path d="M6 42L51 16V10H5z" fill="#333839" opacity=".6" /><rect x="3" y="50" width="49" height="3" fill="#6c7073" />
          <text x="5" y="30" fontSize="15" fontFamily="Liberation Mono, monospace" fill="#31bb35">$</text><rect x="16" y="17" width="6" height="13" fill="#0a982b" />
          <Badge />
        </Cell>
        <Cell glow="#44dd66">
          <rect x="5" y="5" width="45" height="46" rx="2" fill="url(#leaf)" stroke="#1caa41" />
          <path d="M13 19l9-8q8-3 15 1 5 1 5 16-1 18-8 20-8 1-8-6 1-5 6-4v4h4q2-8-5-6l-2 2q-14-1-16-19z" fill="#3d4a47" /><path d="M14 19h8V11" fill="none" stroke="#55db75" /><path d="M33 26q2-3 4 0z" fill="#47d46a" />
        </Cell>
        <Cell glow="#ffffff">
          <rect x="4" y="5" width="47" height="47" rx="9" fill="#bc672b" /><rect x="7" y="8" width="41" height="41" rx="5" fill="#f7f5f1" />
          <path d="M27.500 10v36" stroke="#d0ccc5" /><path d="M14 23h6v8h4l-7 7-7-7h4z" fill="#4a83dc" /><path d="M35 36h6v-7h4l-7-9-7 9h4z" fill="#39ba23" />
        </Cell>
        <Cell glow="#88dd88">
          {swatches.map((color, i) => (
            <g key={color} transform={`rotate(${i * 11 - 59} 42 48)`}><rect x="37" y="6" width="10" height="46" rx="2" fill="#e8e8e8" /><rect x="37" y="6" width="10" height="10" fill={color} /><rect x="37" y="17" width="10" height="7" fill={color} opacity=".8" /><rect x="37" y="25" width="10" height="7" fill={color} opacity=".5" /><rect x="37" y="33" width="10" height="7" fill={color} opacity=".25" /></g>
          ))}
          <circle cx="42" cy="46" r="2.500" fill="#333" />
        </Cell>
        <Cell glow="#66dddd" running>
          <circle cx="27.500" cy="28" r="23.500" fill="#f82b16" stroke="#f5b7a5" strokeWidth="1.600" />
          <text x="26" y="39" textAnchor="middle" fontSize="27" fontWeight="700" fontStyle="italic" fontFamily="Liberation Sans, sans-serif" textLength="34" fill="#fff" stroke="#fff">3G</text>
          <Badge />
        </Cell>
        <Cell glow="#55aa88" running>
          <circle cx="26.500" cy="28" r="25" fill="#7050a1" />
          <path d="M28 12C5 8-3 30 9 43M30 19C13 15 8 30 16 42M31 26c-8-3-13 8-6 16" fill="none" stroke="#e8e0f3" strokeWidth="3.500" />
          <rect x="0" y="41" width="53" height="13" rx="5" fill="#116c3c" /><text x="26.500" y="52" textAnchor="middle" fontSize="11.500" fontWeight="700" fontFamily="Open Sans, sans-serif" fill="#fff">0.7 K</text>
        </Cell>
        <svg className="shrink-0" width="27" height="68" viewBox="0 0 27 68"><path d="M7 30l11 31" stroke="#81777d" strokeWidth="1.500" /></svg>
        <Folder><circle cx="27.500" cy="31" r="12" fill="#7fb0cc" /><path d="M24 21h7v5h5l-8.500 7-8.500-7h5zM23 35h9v6h-9zM25 38h5" fill="#b7dcec" stroke="#6699b6" strokeWidth="1" /></Folder>
        <Folder><path d="M27 18L16 43M28 18l12 25M14 34h27" strokeWidth="3" /></Folder>
        <Cell glow="#cccccc">
          <path d="M9 11h37l-4 37q-14 8-29 0z" fill="#4a494c" /><path d="M9 11h37l-4 37q-14 8-29 0z" fill="url(#mesh)" />
          <ellipse cx="27.500" cy="10" rx="18.500" ry="6" fill="#2e2d30" stroke="#d7d7dc" strokeWidth="2.500" /><path d="M12 46q15 7 30 0v4q-15 7-30 0z" fill="#c8c6cc" />
        </Cell>
      </div>
    </div>
  );
}

export default function App() {
  return (
    <div className="flex h-[869px] w-[1429px] flex-col overflow-hidden bg-[#640035]">
      <div className="flex h-[801px] shrink-0">
        <div className="flex w-[1424px] shrink-0 flex-col">
          <BrowserChrome />
          <div className="flex h-[708px]">
            <Sidebar />
            <div className="flex w-[1166px] flex-col">
              <Nav />
              <Banner />
              <Forms />
              <Footer />
            </div>
          </div>
        </div>
        <EditorEdge />
      </div>
      <Dock />
    </div>
  );
}
